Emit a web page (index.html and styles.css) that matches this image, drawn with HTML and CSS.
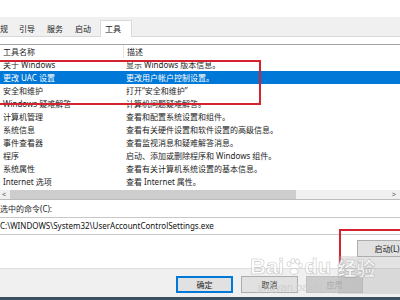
FILE: index.html
```html
<!DOCTYPE html>
<html lang="zh-CN">

<head>
    <meta charset="UTF-8">
    <title>系统配置 - 工具</title>
    <link rel="stylesheet" href="styles.css">
</head>

<body>
    <div class="dialog">
        <div class="tabs">
            <span class="tab first">常规</span>
            <span class="tab">引导</span>
            <span class="tab">服务</span>
            <span class="tab">启动</span>
            <span class="tab active">工具</span>
        </div>

        <div class="page">
            <div class="list">
                <div class="list-head">
                    <span class="cell">工具名称</span>
                    <span class="cell sep">描述</span>
                </div>
                <div class="list-body">
                    <div class="row"><span class="cell">关于 Windows</span><span class="cell">显示 Windows 版本信息。</span></div>
                    <div class="row selected"><span class="cell">更改 UAC 设置</span><span class="cell">更改用户帐户控制设置。</span></div>
                    <div class="row"><span class="cell">安全和维护</span><span class="cell">打开“安全和维护”</span></div>
                    <div class="row"><span class="cell">Windows 疑难解答</span><span class="cell">计算机问题疑难解答。</span></div>
                    <div class="row"><span class="cell">计算机管理</span><span class="cell">查看和配置系统设置和组件。</span></div>
                    <div class="row"><span class="cell">系统信息</span><span class="cell">查看有关硬件设置和软件设置的高级信息。</span></div>
                    <div class="row"><span class="cell">事件查看器</span><span class="cell">查看监视消息和疑难解答消息。</span></div>
                    <div class="row"><span class="cell">程序</span><span class="cell">启动、添加或删除程序和 Windows 组件。</span></div>
                    <div class="row"><span class="cell">系统属性</span><span class="cell">查看有关计算机系统设置的基本信息。</span></div>
                    <div class="row"><span class="cell">Internet 选项</span><span class="cell">查看 Internet 属性。</span></div>
                    <div class="row"><span class="cell">Internet 协议配置</span><span class="cell">查看和配置 IP 地址设置。</span></div>
                </div>
                <div class="hscroll">
                    <span class="arrow">&lt;</span>
                    <div class="track"><div class="thumb"></div></div>
                    <span class="arrow">&gt;</span>
                </div>
            </div>

            <div class="cmd-label">选中的命令(C):</div>
            <div class="cmd-box">C:\WINDOWS\System32\UserAccountControlSettings.exe</div>

            <div class="launch-row">
                <button class="btn launch">启动(L)</button>
            </div>
        </div>

        <div class="footer">
            <button class="btn default">确定</button>
            <button class="btn">取消</button>
            <button class="btn" disabled>应用</button>
        </div>

        <!-- red marks drawn over the screenshot -->
        <div class="mark mark-list"></div>
        <div class="mark mark-launch"></div>

        <div class="wm-shade"></div>
        <div class="watermark">
            <div class="wm-logo">
                <span>Bai</span>
                <svg class="paw" width="18" height="18" viewBox="0 0 18 18">
                    <ellipse cx="4" cy="6" rx="2" ry="2.6"/>
                    <ellipse cx="8" cy="3" rx="2" ry="2.6"/>
                    <ellipse cx="12.5" cy="3.5" rx="2" ry="2.6"/>
                    <ellipse cx="15.5" cy="7.5" rx="1.8" ry="2.4"/>
                    <path d="M5 14 C5 9 13 9 13 14 C13 17 5 17 5 14 Z"/>
                </svg>
                <span>du</span>
                <span class="wm-cn">经验</span>
            </div>
            <div class="wm-url">jingyan.baidu.com</div>
        </div>
    </div>
</body></html>
```

FILE: styles.css
```css
* {
    box-sizing: border-box;
    padding: 0;
    margin: 0;
}

body {
    font-family: "Noto Sans", "Noto Sans CJK SC", sans-serif;
    font-size: 8px;
    color: #1e1e1e;
    background: #fff;
    overflow: hidden;
}

.dialog {
    position: relative;
    width: 400px;
    height: 300px;
    padding-top: 17px;
    overflow: hidden;
}

/* tab strip */
.tabs {
    display: flex;
    align-items: flex-end;
    height: 20px;
    background: #f0f0f0;
    border-bottom: 1px solid #d9d9d9;
}

.tab {
    height: 14px;
    line-height: 14px;
    padding: 0 6px;
    color: #222;
    white-space: nowrap;
}

.tab.first {
    margin-left: -14px;
    padding-right: 5px;
}

.tab.active {
    height: 17px;
    line-height: 15px;
    margin-left: 3px;
    margin-bottom: -1px;
    padding: 0 10px 0 4px;
    background: #fff;
    border: 1px solid #d9d9d9;
    border-bottom: none;
}

/* tab page */
.page {
    padding-top: 7px;
    background: #fff;
}

.list {
    margin-left: -2px;
    border-top: 1px solid #a3a3a3;
    border-bottom: 1px solid #bcbcbc;
}

.list-head,
.row {
    display: grid;
    grid-template-columns: 125px 1fr;
    height: 13px;
    line-height: 13px;
}

.cell {
    padding-left: 5px;
    white-space: nowrap;
    overflow: hidden;
}

.cell + .cell {
    padding-left: 3px;
}

.list-head .sep {
    border-left: 1px solid #e5e5e5;
}

.list-body {
    height: 132px;
    overflow: hidden;
}

.row.selected {
    background: #0078d7;
    color: #fff;
}

.hscroll {
    display: flex;
    align-items: center;
    height: 9px;
    background: #f0f0f0;
}

.arrow {
    width: 12px;
    font-size: 7px;
    line-height: 9px;
    text-align: center;
    color: #606060;
}

.track {
    flex: 1;
    height: 9px;
}

.thumb {
    width: 286px;
    height: 9px;
    background: #cdcdcd;
}

.cmd-label {
    margin-top: 3px;
    height: 12px;
    line-height: 12px;
}

.cmd-box {
    margin: 2px 0 0 -2px;
    height: 18px;
    line-height: 16px;
    padding-left: 2px;
    border-top: 1px solid #c8c8c8;
    border-bottom: 1px solid #c8c8c8;
    color: #111;
}

.launch-row {
    height: 33px;
    padding: 5px 0 0 357px;
}

/* buttons */
.btn {
    display: block;
    width: 57px;
    height: 17px;
    font-family: inherit;
    font-size: 8px;
    color: #1e1e1e;
    background: #e1e1e1;
    border: 1px solid #adadad;
}

.btn.launch {
    width: 60px;
}

.btn.default {
    border: 1px solid #0078d7;
    box-shadow: inset 0 0 0 1px #0078d7;
}

.btn:disabled {
    color: #a0a0a0;
    background: #ccc;
    border-color: #bfbfbf;
}

.footer {
    display: flex;
    gap: 8px;
    height: 32px;
    padding: 7px 0 0 176px;
    background: #f0f0f0;
    border-top: 1px solid #dedede;
    border-bottom: 3px solid #3b4f5e;
}

/* red hand-drawn boxes */
.mark {
    position: absolute;
    border: 2px solid #d2232e;
}

.mark-list {
    left: -4px;
    top: 60px;
    width: 265px;
    height: 45px;
}

.mark-launch {
    left: 339px;
    top: 229px;
    width: 80px;
    height: 36px;
    border-bottom: none;
}

/* baidu watermark */
.wm-shade {
    position: absolute;
    left: 338px;
    top: 256px;
    width: 62px;
    height: 38px;
    background: rgba(175, 175, 175, 0.35);
}

.watermark {
    position: absolute;
    left: 250px;
    top: 253px;
    width: 150px;
}

.wm-logo {
    display: flex;
    align-items: center;
    height: 28px;
    font-family: "Liberation Sans", sans-serif;
    font-size: 22px;
    font-weight: bold;
    color: rgba(255, 255, 255, 0.85);
    -webkit-text-stroke: 0.6px rgba(120, 120, 120, 0.45);
}

.wm-cn {
    margin-left: 6px;
    font-family: "Noto Sans CJK SC", sans-serif;
    font-size: 19px;
}

.paw {
    fill: rgba(255, 255, 255, 0.85);
    stroke: rgba(120, 120, 120, 0.45);
    stroke-width: 0.6;
    margin: 0 1px;
}

.wm-url {
    padding-left: 8px;
    font-family: "Liberation Sans", sans-serif;
    font-size: 11px;
    color: rgba(200, 200, 200, 0.8);
}
```
